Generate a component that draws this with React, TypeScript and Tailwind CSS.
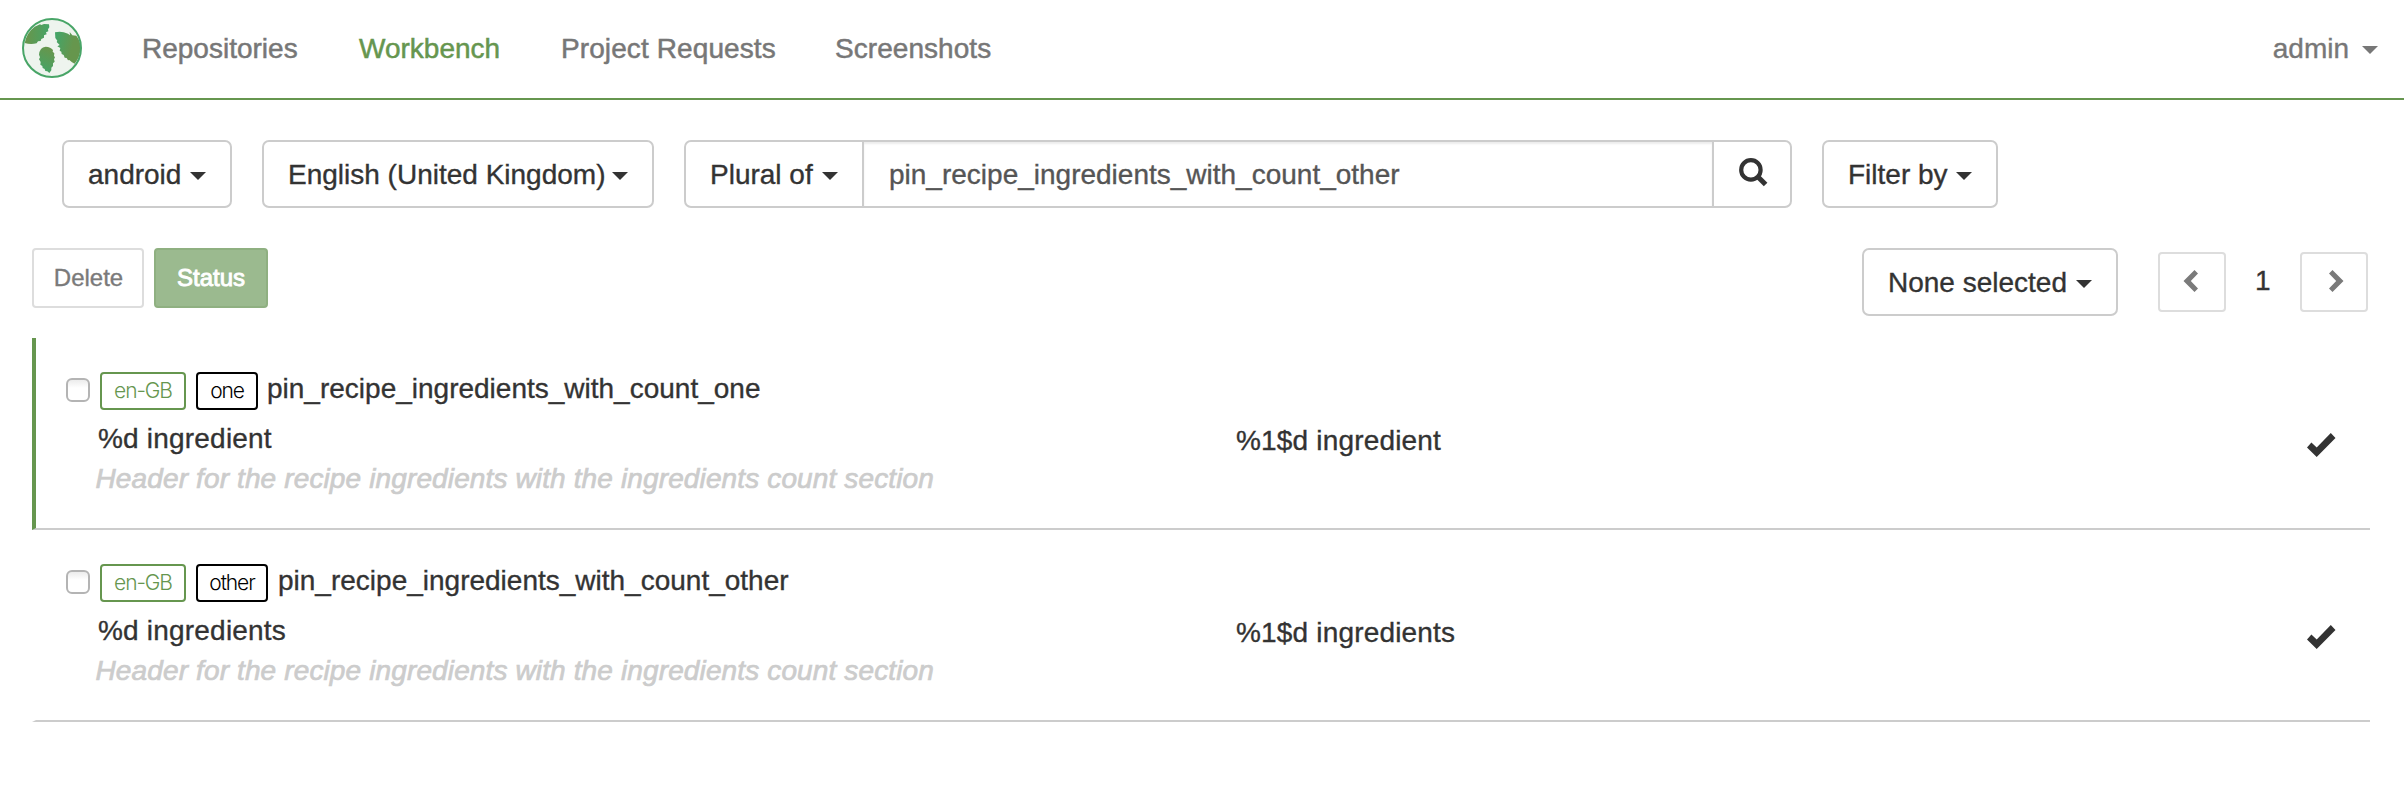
import type { ReactNode } from 'react';

function Logo() {
  return (
    <svg className="h-[60px] w-[60px] shrink-0" viewBox="66 54 180 180">
      <defs>
        <linearGradient id="leafA" x1="0" y1="0" x2="1" y2="0">
          <stop offset="0.1" stopColor="#66964d" />
          <stop offset="1" stopColor="#45a467" />
        </linearGradient>
        <linearGradient id="leafB" x1="0" y1="0" x2="1" y2="0.3">
          <stop offset="0.1" stopColor="#45a467" />
          <stop offset="0.75" stopColor="#66964d" />
        </linearGradient>
        <linearGradient id="leafC" x1="0.7" y1="0" x2="0.4" y2="1">
          <stop offset="0.1" stopColor="#66964d" />
          <stop offset="1" stopColor="#45a467" />
        </linearGradient>
      </defs>
      <circle cx="156" cy="144" r="87" fill="#eef4ee" />
      <path
        fill="url(#leafA)"
        d="M74 129 Q80 98 104 80 L120 73 L124 75 L132 72 L147 73 L148 82 L144 88 L145 94 L138 97 L140 103 L132 106 L132 113 L124 117 L122 123 L114 124 L110 130 Q92 135 74 129Z"
      />
      <path
        fill="url(#leafB)"
        d="M165 97 Q184 92 204 101 L210 106 L209 96 L217 106 L229 107 Q242 124 242 144 Q240 172 224 191 L216 187 L208 180 L204 181 L200 174 L194 173 L191 165 L185 162 L184 155 L179 152 L181 144 L172 139 L179 135 L170 126 L172 122 L166 114Z"
      />
      <path
        fill="url(#leafC)"
        d="M137 140 Q152 141 159 150 L158 155 L163 160 L162 168 L165 172 L162 178 L164 185 L159 190 L159 198 L154 203 L154 211 L148 219 L142 214 L136 213 L134 207 L128 204 L127 198 L121 194 L122 186 L117 178 L120 172 L117 164 Q119 142 137 140Z"
      />
      <circle cx="156" cy="144" r="87" fill="none" stroke="#48a567" strokeWidth="6" />
    </svg>
  );
}

function Caret({ className = '' }: { className?: string }) {
  return (
    <span
      className={`inline-block h-0 w-0 shrink-0 border-x-8 border-t-8 border-x-transparent border-t-current ${className}`}
    />
  );
}

function DropdownButton({ children, className = '' }: { children: ReactNode; className?: string }) {
  return (
    <button
      className={`flex h-[68px] shrink-0 items-start justify-between whitespace-nowrap rounded-[7px] border-2 border-[#ccc] bg-white pr-6 pl-6 pt-3 text-left ${className}`}
    >
      <span>{children}</span>
      <Caret className="mt-[18px]" />
    </button>
  );
}

function Chevron({ flip = false }: { flip?: boolean }) {
  return (
    <svg width="15" height="22" viewBox="0 0 15 22" className={flip ? 'rotate-180' : ''}>
      <path fill="#7a7a7a" d="M3.5 0 L14.5 11 L3.5 22 L0 18.5 L7.2 11 L0 3.5Z" />
    </svg>
  );
}

function CheckMark() {
  return (
    <svg width="29" height="24" viewBox="0 0 29 24">
      <path fill="#333" d="M0 14.4 L4.4 9.6 L9.7 14.5 L23.8 0 L28.5 4.9 L9.7 24Z" />
    </svg>
  );
}

type Unit = {
  form: string;
  name: string;
  source: string;
  target: string;
  comment: string;
  active: boolean;
  badge: string;
};

const units: Unit[] = [
  {
    form: 'one',
    name: 'pin_recipe_ingredients_with_count_one',
    source: '%d ingredient',
    target: '%1$d ingredient',
    comment: 'Header for the recipe ingredients with the ingredients count section',
    active: true,
    badge: 'mr-[9px] w-[62px]',
  },
  {
    form: 'other',
    name: 'pin_recipe_ingredients_with_count_other',
    source: '%d ingredients',
    target: '%1$d ingredients',
    comment: 'Header for the recipe ingredients with the ingredients count section',
    active: false,
    badge: 'mr-2.5 w-[72px]',
  },
];

function UnitRow({ unit }: { unit: Unit }) {
  return (
    <div
      className={`flex h-48 border-b-2 border-l-4 border-b-[#ccc] pt-[30px] ${
        unit.active ? 'border-l-[#66964f]' : 'border-l-transparent'
      }`}
    >
      <div className="w-[1200px] shrink-0 pl-[30px]">
        <div className="flex h-10 items-start">
          <span className="mt-2.5 h-6 w-6 shrink-0 rounded-[6px] border-2 border-[#b4b4b4] bg-gradient-to-b from-[#ececec] to-white to-40%" />
          <span className="ml-2.5 mt-1 flex h-[38px] w-[86px] shrink-0 justify-center rounded-[4px] border-2 border-[#66964f] font-['Inter'] text-[21px] leading-[34px] font-light tracking-[-1.1px] text-[#66964f] [-webkit-text-stroke:0px]">
            en-GB
          </span>
          <span
            className={`ml-2.5 mt-1 flex h-[38px] shrink-0 justify-center rounded-[4px] border-2 border-black font-['Inter'] text-[21px] leading-[34px] font-light tracking-[-1.1px] text-black [-webkit-text-stroke:0px] ${unit.badge}`}
          >
            {unit.form}
          </span>
          <span>{unit.name}</span>
        </div>
        <div className="mt-2.5 h-10 pl-8 tracking-[0.2px]">{unit.source}</div>
        <div className="h-10 pl-[29.5px] italic tracking-[0.13px] text-[#ccc] [-webkit-text-stroke:0.7px_#ccc]">
          {unit.comment}
        </div>
      </div>
      <div className="grow pt-[52px] tracking-[0.18px]">{unit.target}</div>
      <div className="w-16 shrink-0 pt-[65px] pl-px">
        <CheckMark />
      </div>
    </div>
  );
}

export default function App() {
  return (
    <div className="min-h-[790px] w-[2404px] bg-white font-['Liberation_Sans',Arial,sans-serif] text-[28px] leading-[42px] text-[#333] [-webkit-text-stroke:0.35px_currentColor]">
      <header className="flex h-[100px] items-start border-b-2 border-[#66964f] pr-[26px] pl-[22px] text-[#777]">
        <div className="pt-[18px]">
          <Logo />
        </div>
        <nav className="flex pt-7 pl-[60px] [-webkit-text-stroke:0.5px_currentColor]">
          <a className="w-[217px]">Repositories</a>
          <a className="w-[202px] text-[#66964f]">Workbench</a>
          <a className="w-[274px] tracking-[0.1px]">Project Requests</a>
          <a className="tracking-[0.05px]">Screenshots</a>
        </nav>
        <div className="ml-auto flex pt-7">
          <span>admin</span>
          <Caret className="mt-[18px] ml-[13px]" />
        </div>
      </header>

      <section className="flex pt-10 pl-[62px]">
        <DropdownButton className="w-[170px]">android</DropdownButton>
        <DropdownButton className="ml-[30px] w-[392px]">English (United Kingdom)</DropdownButton>
        <DropdownButton className="ml-[30px] w-[180px] rounded-r-none">Plural of</DropdownButton>
        <div className="h-[68px] w-[848px] border-y-2 border-[#ccc] pt-3 pl-[25px] text-[#555] shadow-[inset_0_2px_2px_rgba(0,0,0,0.075)]">
          pin_recipe_ingredients_with_count_other
        </div>
        <button className="flex h-[68px] w-20 rounded-r-[7px] border-2 border-[#ccc] pt-4 pl-[25px]">
          <svg width="29" height="29" viewBox="0 0 29 29" fill="none" stroke="#333">
            <circle cx="11.9" cy="11.9" r="9.7" strokeWidth="4.2" />
            <path d="M18.6 18.6 L26.6 26.6" strokeWidth="5" />
          </svg>
        </button>
        <DropdownButton className="ml-[30px] w-[176px]">Filter by</DropdownButton>
      </section>

      <section className="flex items-start pt-10 pr-9 pl-8">
        <button className="h-[60px] w-28 rounded-[4px] border-2 border-[#ddd] pl-px text-2xl leading-[42px] text-[#7a7a7a]">
          Delete
        </button>
        <button className="ml-2.5 h-[60px] w-[114px] rounded-[4px] border-2 border-[#8fb081] bg-[#9bba8f] text-2xl leading-[42px] text-white [-webkit-text-stroke:0.9px_white]">
          Status
        </button>
        <DropdownButton className="ml-auto w-64">None selected</DropdownButton>
        <button className="mt-1 ml-10 flex h-[60px] w-[68px] rounded-[4px] border-2 border-[#ddd] pt-4 pl-[23px]">
          <Chevron flip />
        </button>
        <span className="mt-3 ml-[29px] w-[45px]">1</span>
        <button className="mt-1 flex h-[60px] w-[68px] rounded-[4px] border-2 border-[#ddd] pt-4 pl-[27px]">
          <Chevron />
        </button>
      </section>

      <main className="mt-[22px] ml-8 w-[2338px]">
        {units.map((unit) => (
          <UnitRow key={unit.form} unit={unit} />
        ))}
      </main>
    </div>
  );
}
